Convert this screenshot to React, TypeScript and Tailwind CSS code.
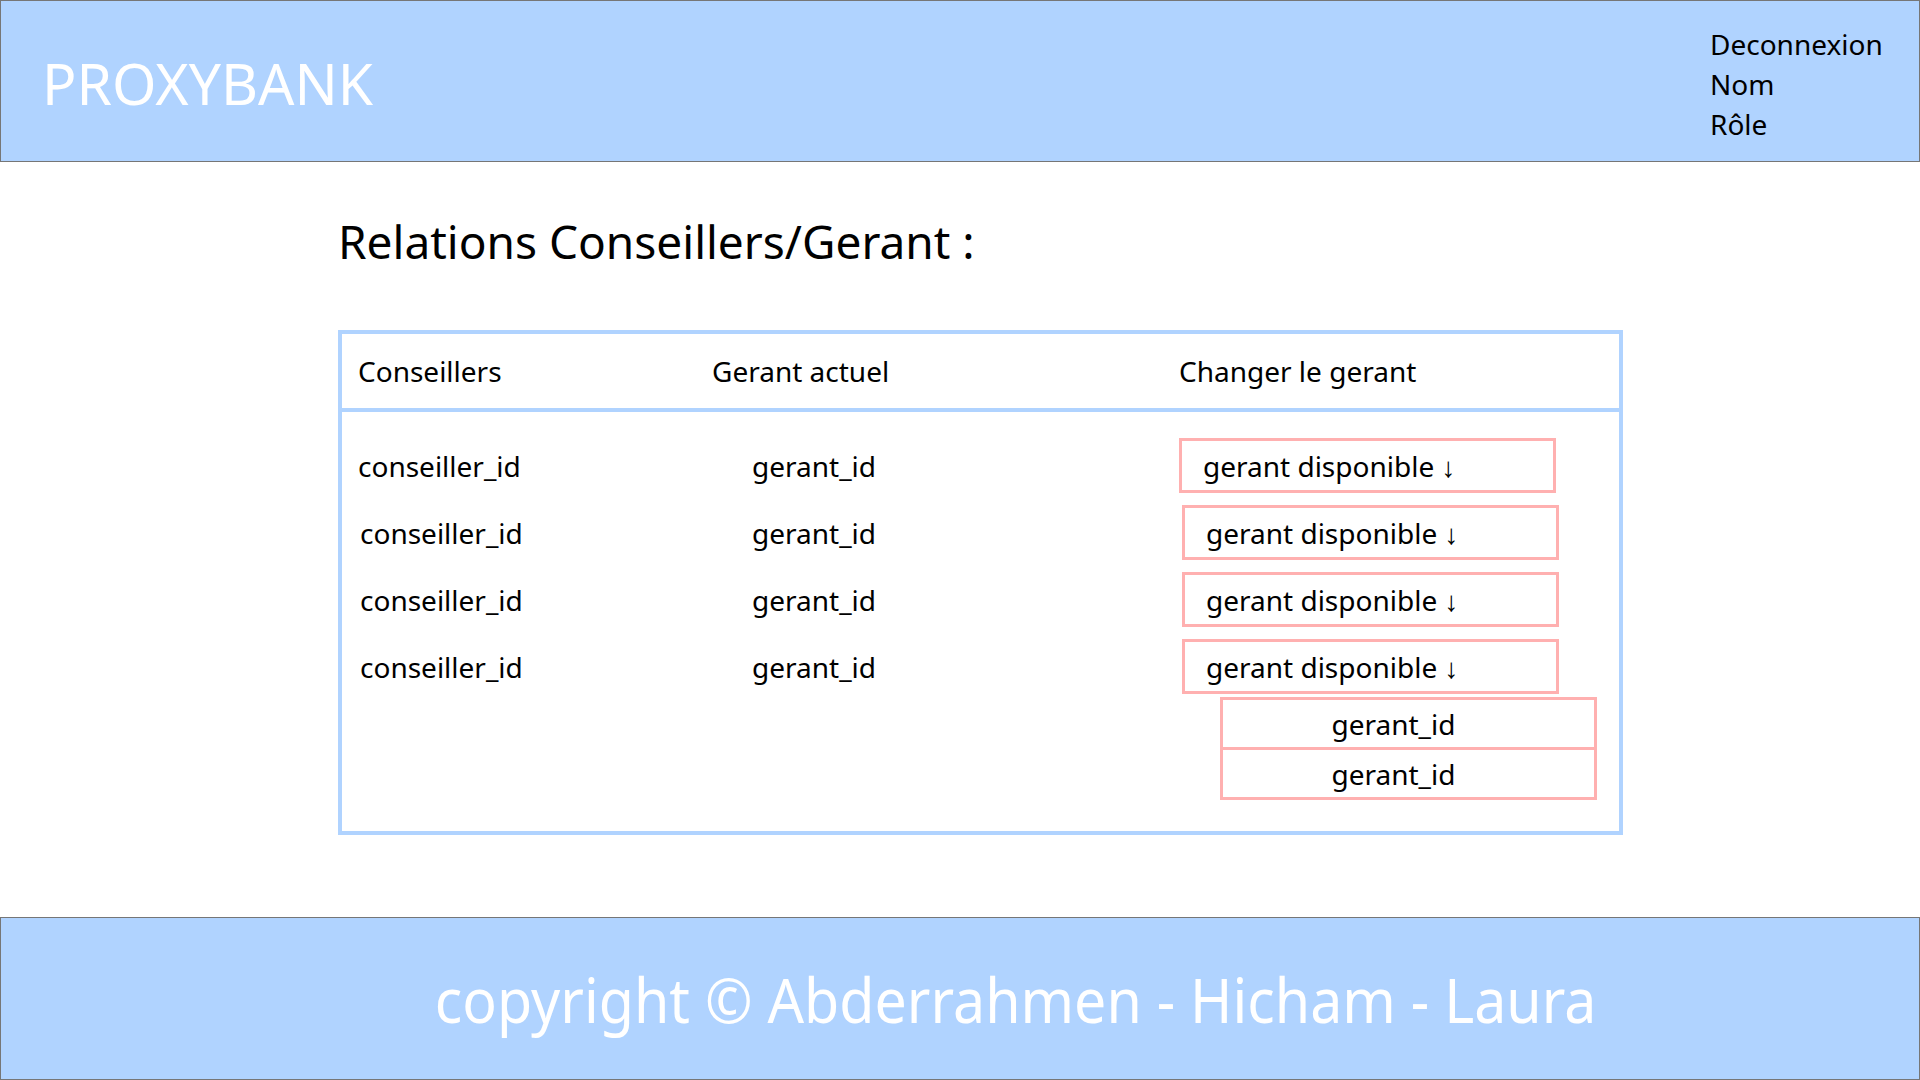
import React from 'react';

const rows = [
  { conseiller: 'conseiller_id', gerant: 'gerant_id' },
  { conseiller: 'conseiller_id', gerant: 'gerant_id' },
  { conseiller: 'conseiller_id', gerant: 'gerant_id' },
  { conseiller: 'conseiller_id', gerant: 'gerant_id' },
];

const options = ['gerant_id', 'gerant_id'];

export default function App() {
  return (
    <div className="w-[1920px] h-[1080px] flex flex-col bg-white text-black font-['Noto_Sans',sans-serif] overflow-hidden">
      <header className="h-[162px] shrink-0 bg-[#b0d3ff] border border-[#767676] flex items-center justify-between pl-[41px] pr-[38px]">
        <h1 className="text-[57px] text-white leading-none mt-[4px]">PROXYBANK</h1>
        <nav className="flex flex-col text-[28px] leading-[40px] w-[171px] mt-[5px]">
          <span>Deconnexion</span>
          <span>Nom</span>
          <span>Rôle</span>
        </nav>
      </header>

      <main className="flex-1 pl-[338px] pt-[56px]">
        <h2 className="text-[46px] leading-none mb-[66px]">Relations Conseillers/Gerant :</h2>

        <div className="w-[1285px] border-[4px] border-[#b0d3ff]">
          <div className="grid grid-cols-[354px_467px_1fr] items-center h-[78px] border-b-[4px] border-[#b0d3ff] pl-[16px] text-[28px]">
            <span>Conseillers</span>
            <span>Gerant actuel</span>
            <span>Changer le gerant</span>
          </div>

          <div className="flex flex-col gap-[12px] pt-[26px] pb-[137px] pl-[16px]">
            {rows.map((row, i) => (
              <div key={i} className="grid grid-cols-[354px_467px_1fr] items-center h-[55px] text-[28px]">
                <span className={i === 0 ? '' : 'pl-[2px]'}>{row.conseiller}</span>
                <span className="pl-[40px]">{row.gerant}</span>
                <div className={'relative ' + (i === 0 ? '' : 'pl-[3px]')}>
                  <div className="w-[377px] h-[55px] border-[3px] border-[#ffb0b0] flex items-center pl-[21px]">
                    gerant disponible ↓
                  </div>
                  {i === rows.length - 1 && (
                    <div className="absolute left-[41px] top-[58px] w-[377px] flex flex-col">
                      {options.map((opt, j) => (
                        <div
                          key={j}
                          className={
                            'h-[53px] border-[3px] border-[#ffb0b0] flex items-center justify-center pr-[30px] bg-white ' +
                            (j > 0 ? '-mt-[3px]' : '')
                          }
                        >
                          {opt}
                        </div>
                      ))}
                    </div>
                  )}
                </div>
              </div>
            ))}
          </div>
        </div>
      </main>

      <footer className="h-[163px] shrink-0 bg-[#b0d3ff] border border-[#767676] flex items-center justify-center pl-[112px]">
        <p className="text-white text-[62px] leading-none scale-x-[0.924]">copyright © Abderrahmen - Hicham - Laura</p>
      </footer>
    </div>
  );
}
